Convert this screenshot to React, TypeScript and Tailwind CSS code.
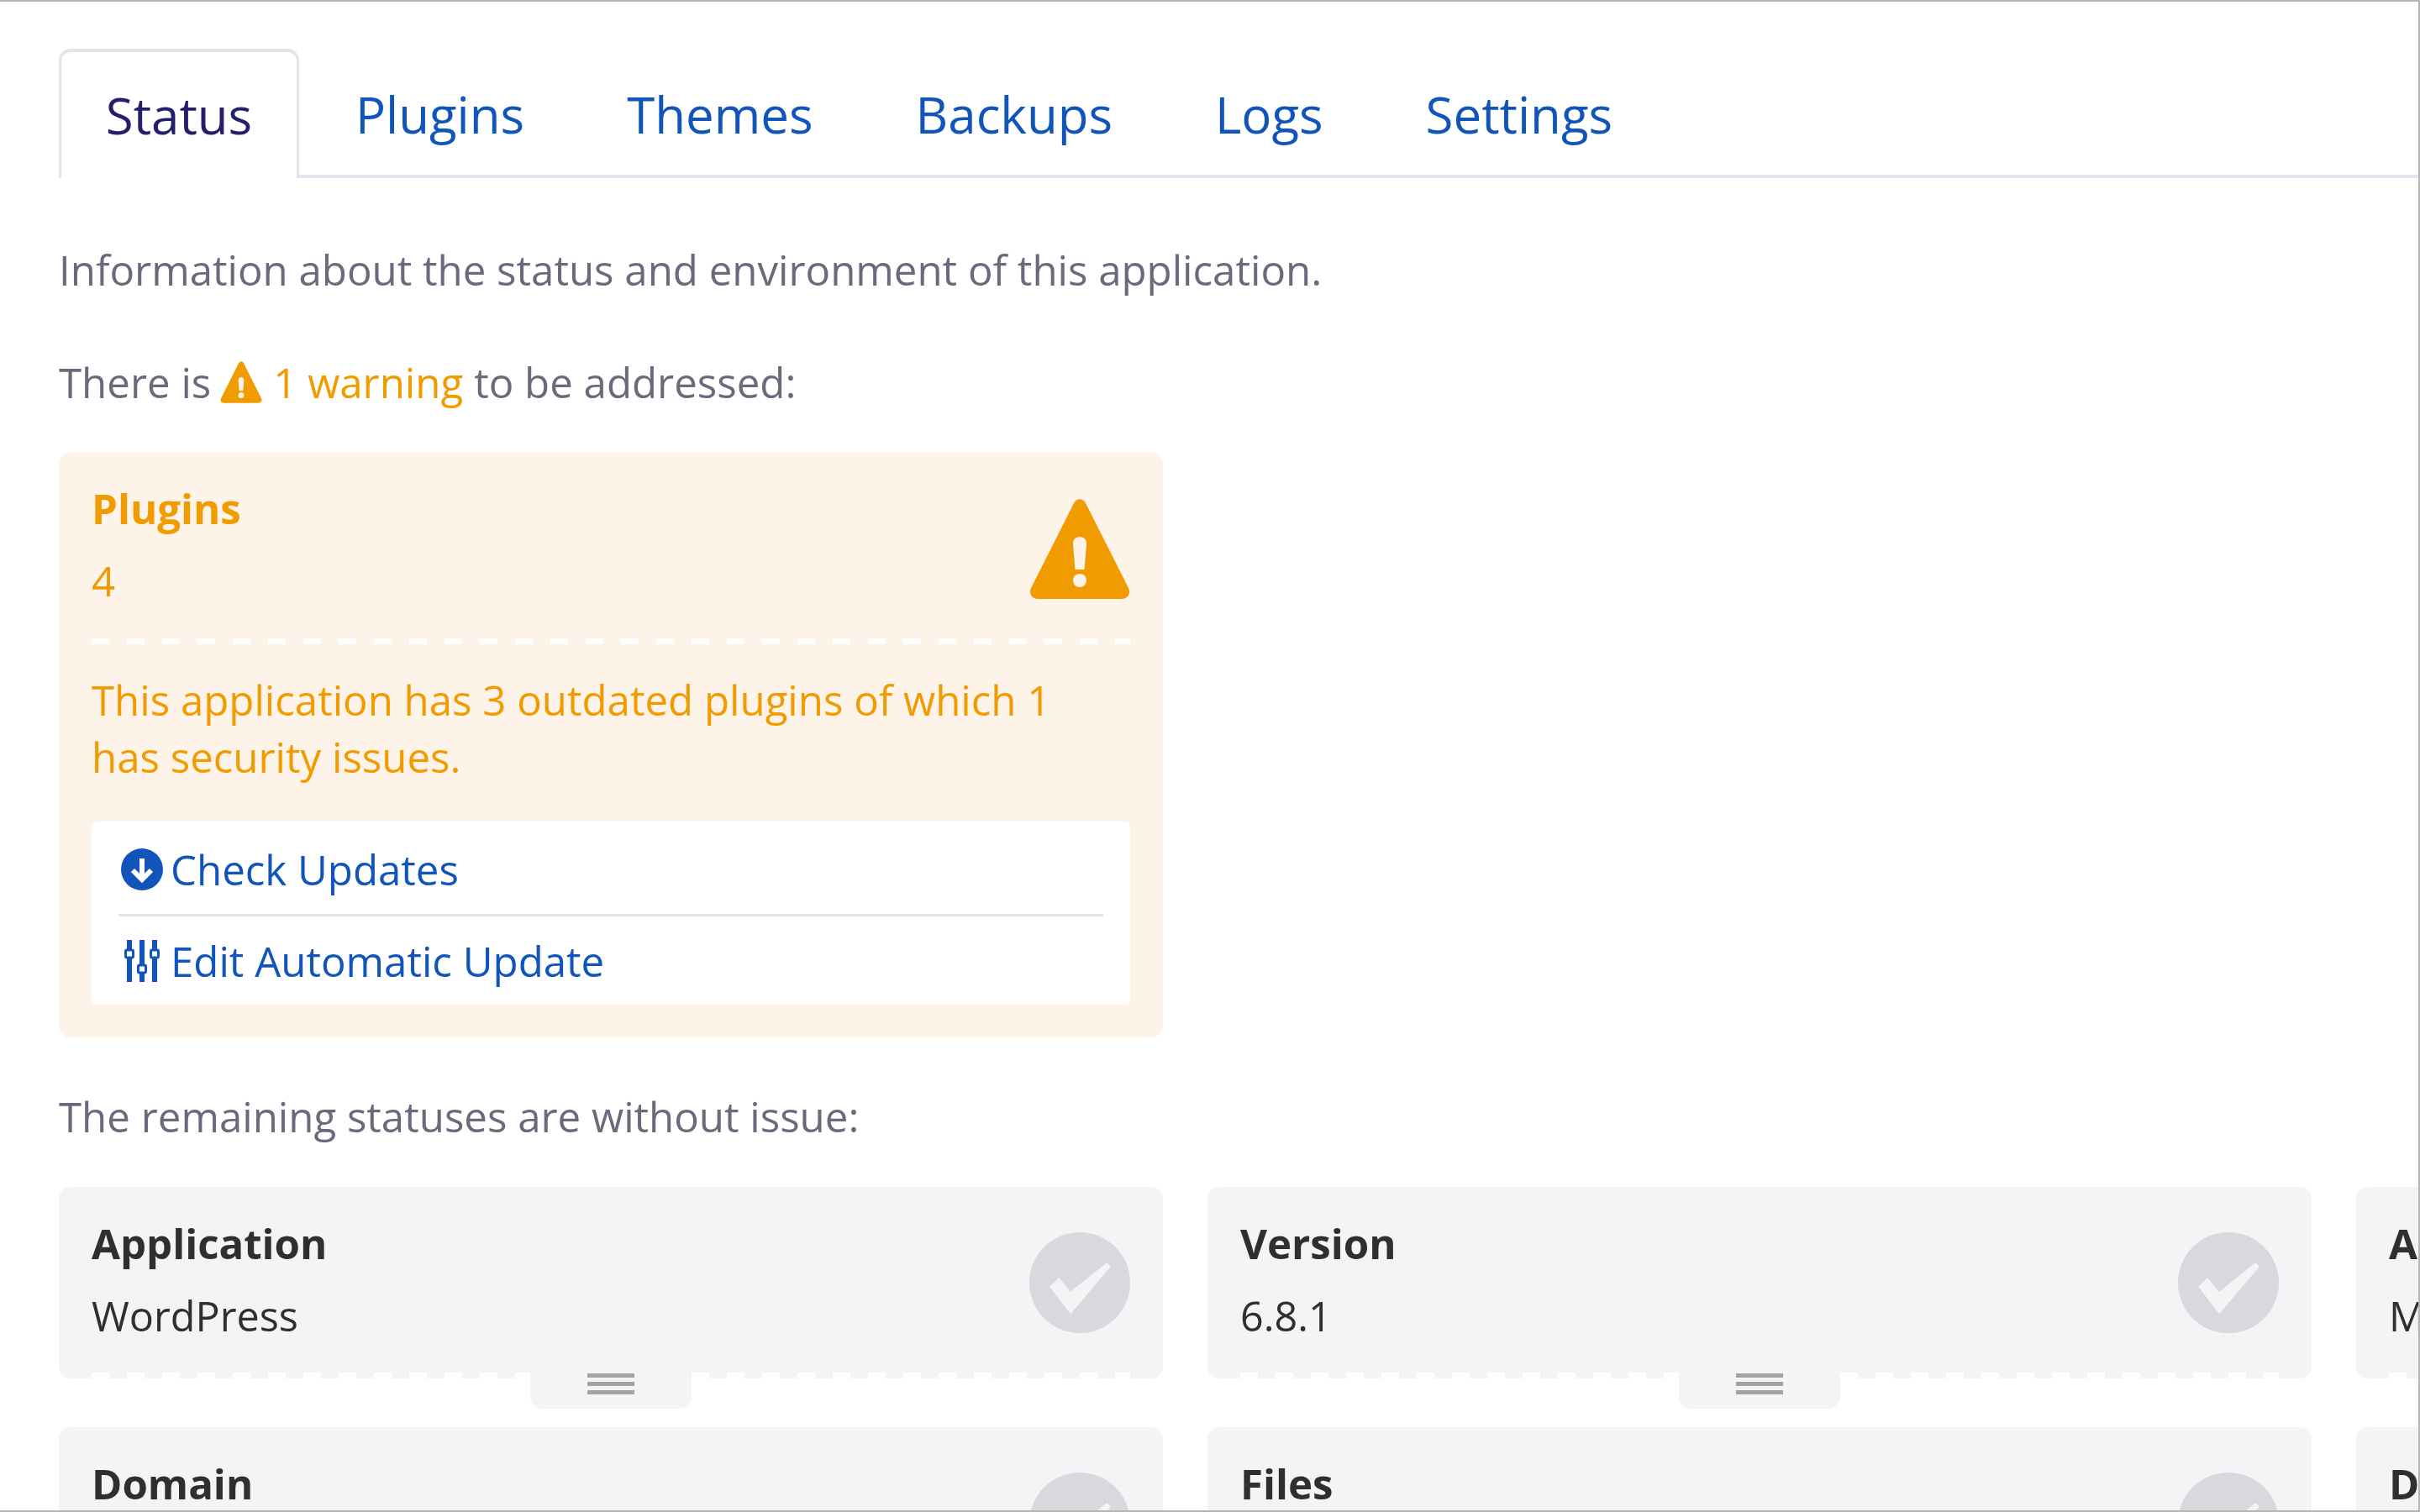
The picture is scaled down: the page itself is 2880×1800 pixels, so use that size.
import type { ReactNode } from 'react';

// ─── Icons ────────────────────────────────────────────────────────────────────

function WarningIcon({ className }: { className: string }) {
  return (
    <svg viewBox="0 0 120 119" className={className} fill="none">
      <path d="M53 5c3-6.500 11-6.500 14 0l51 101c3 6-1 13-8 13H10c-7 0-11-7-8-13z" fill="#f09c00" />
      <path d="M52 54c-.4-5.500 3.200-9 8-9s8.400 3.500 8 9l-2.500 30h-11z" fill="#fdf3e8" />
      <circle cx="60" cy="97" r="8" fill="#fdf3e8" />
    </svg>
  );
}

function CheckBadge() {
  return (
    <svg viewBox="0 0 120 120" className="h-[120px] w-[120px] shrink-0">
      <circle cx="60" cy="60" r="60" fill="#d8d9dc" />
      <path d="M24.300 65L35 54l14 16.700L92.300 36l4.700 4.700L49 97.300z" fill="#f3f4f6" />
    </svg>
  );
}

function DownCircleIcon() {
  return (
    <svg viewBox="0 0 50 50" className="h-[50px] w-[50px] shrink-0">
      <circle cx="25" cy="25" r="25" fill="#1155bb" />
      <path d="M25 12v24M14 26l11 11 11-11" stroke="#fff" strokeWidth="6" fill="none" />
    </svg>
  );
}

function SlidersIcon() {
  return (
    <svg viewBox="0 0 42 50" className="h-[50px] w-[42px] shrink-0" fill="#1155bb">
      <rect x="3" y="0" width="6" height="50" />
      <rect x="18" y="0" width="6" height="50" />
      <rect x="33" y="0" width="6" height="50" />
      <rect x="1.500" y="12" width="9" height="9" rx="1.500" fill="#fff" stroke="#1155bb" strokeWidth="3" />
      <rect x="16.500" y="30" width="9" height="9" rx="1.500" fill="#fff" stroke="#1155bb" strokeWidth="3" />
      <rect x="31.500" y="12" width="9" height="9" rx="1.500" fill="#fff" stroke="#1155bb" strokeWidth="3" />
    </svg>
  );
}

// ─── Bits ─────────────────────────────────────────────────────────────────────

const tabs = ['Plugins', 'Themes', 'Backups', 'Logs', 'Settings'];

function Dashes({ className }: { className: string }) {
  return (
    <div
      className={`h-[7px] bg-[repeating-linear-gradient(90deg,#fff_0,#fff_21px,transparent_21px,transparent_42px)] ${className}`}
    />
  );
}

function ActionRow({ icon, height, children }: { icon: ReactNode; height: string; children: ReactNode }) {
  return (
    <div className={`flex items-center gap-[9px] pl-[3px] text-[#1155bb] ${height}`}>
      <span className="flex w-[50px] shrink-0 justify-center">{icon}</span>
      <span>{children}</span>
    </div>
  );
}

function StatusCard({ title, value }: { title: string; value?: string }) {
  return (
    <div className="relative h-[228px] w-[1314px] shrink-0 rounded-[14px] bg-[#f3f4f6] text-[#2f2f2f]">
      <div className="flex items-start justify-between px-[39px] pt-[33px]">
        <div>
          <div className="font-bold">{title}</div>
          {value && <div className="mt-[18px] text-[48.5px]">{value}</div>}
        </div>
        <div className="pt-[21px]">
          <CheckBadge />
        </div>
      </div>
      <Dashes className="absolute inset-x-[39px] bottom-0" />
      <div className="absolute left-1/2 top-[220px] flex h-[44px] w-[192px] -translate-x-1/2 flex-col items-center gap-[5px] rounded-b-[14px] bg-[#f3f4f6] pt-[2px]">
        <div className="h-[5px] w-[56px] bg-[#a3a3a3]" />
        <div className="h-[5px] w-[56px] bg-[#a3a3a3]" />
        <div className="h-[5px] w-[56px] bg-[#a3a3a3]" />
      </div>
    </div>
  );
}

// ─── Page ─────────────────────────────────────────────────────────────────────

export default function App() {
  return (
    <div className="h-[1800px] w-[2880px] overflow-hidden border-t-2 border-r-2 border-b-2 border-[#b5b5b5] bg-white font-['Open_Sans',sans-serif] text-[49.2px] leading-[68px]">
      <div className="pt-[56px]">
        <div className="flex h-[154px] pl-[70px]">
          <div className="flex h-[154px] w-[286px] shrink-0 items-center justify-center rounded-t-[14px] border-x-[3px] border-t-[4px] border-[#dfe6ed] bg-white text-[60px] text-[#251f6b]">
            Status
          </div>
          <div className="flex flex-1 gap-[122px] border-b-[4px] border-[#dfe6ed] pl-[67px] text-[60px] text-[#1155bb]">
            {tabs.map((tab) => (
              <div key={tab} className="flex h-[150px] items-center pt-[6px]">
                {tab}
              </div>
            ))}
          </div>
        </div>

        <div className="px-[70px] text-[#6b6a7c]">
          <p className="mt-[75px]">Information about the status and environment of this application.</p>
          <p className="mt-[66px] flex items-center">
            <span>There is</span>
            <WarningIcon className="ml-[11px] h-[50px] w-[50px]" />
            <span className="ml-[13px] text-[#f09c00]">1 warning</span>
            <span className="ml-[13px]">to be addressed:</span>
          </p>

          <div className="mt-[50px] w-[1314px] rounded-[14px] bg-[#fdf3e8] px-[39px] pt-[32px] pb-[39px] text-[#f09c00]">
            <div className="flex items-start justify-between">
              <div>
                <div className="font-bold">Plugins</div>
                <div className="mt-[18px]">4</div>
              </div>
              <WarningIcon className="mt-[23px] h-[119px] w-[120px]" />
            </div>
            <Dashes className="mt-[35px] h-[6px]" />
            <p className="mt-[32px] w-[1200px]">
              This application has 3 outdated plugins of which 1 has security issues.
            </p>
            <div className="mt-[43px] rounded-[6px] bg-white px-[32px]">
              <ActionRow icon={<DownCircleIcon />} height="h-[110px] pt-[3px]">
                Check Updates
              </ActionRow>
              <div className="h-[3px] bg-[#dfe6ed]" />
              <ActionRow icon={<SlidersIcon />} height="h-[105px]">
                Edit Automatic Update
              </ActionRow>
            </div>
          </div>

          <p className="mt-[60px]">The remaining statuses are without issue:</p>

          <div className="mt-[50px] flex flex-col gap-[58px]">
            <div className="flex gap-[53px]">
              <StatusCard title="Application" value="WordPress" />
              <StatusCard title="Version" value="6.8.1" />
              <StatusCard title="Auto Update" value="Manual" />
            </div>
            <div className="flex gap-[53px]">
              <StatusCard title="Domain" />
              <StatusCard title="Files" />
              <StatusCard title="Database" />
            </div>
          </div>
        </div>
      </div>
    </div>
  );
}
